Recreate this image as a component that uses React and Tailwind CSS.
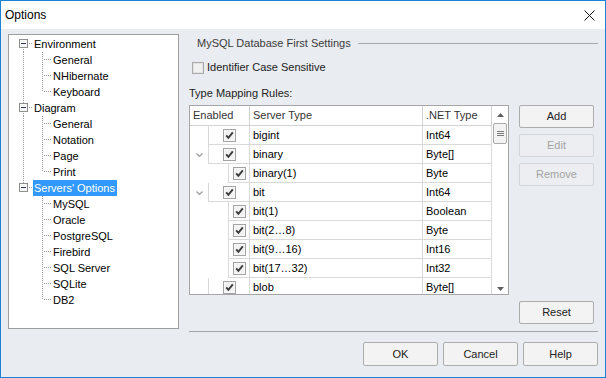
import React from "react";

const treeItems = [
  { t: "Environment", root: true, first: true },
  { t: "General", cont: true },
  { t: "NHibernate", cont: true },
  { t: "Keyboard", cont: true, last: true },
  { t: "Diagram", root: true },
  { t: "General", cont: true },
  { t: "Notation", cont: true },
  { t: "Page", cont: true },
  { t: "Print", cont: true, last: true },
  { t: "Servers' Options", root: true, lastRoot: true, sel: true },
  { t: "MySQL" },
  { t: "Oracle" },
  { t: "PostgreSQL" },
  { t: "Firebird" },
  { t: "SQL Server" },
  { t: "SQLite" },
  { t: "DB2", last: true },
];

const rows = [
  { n: "bigint", ty: "Int64", lv: 0 },
  { n: "binary", ty: "Byte[]", lv: 0, ex: true },
  { n: "binary(1)", ty: "Byte", lv: 1 },
  { n: "bit", ty: "Int64", lv: 0, ex: true },
  { n: "bit(1)", ty: "Boolean", lv: 1 },
  { n: "bit(2…8)", ty: "Byte", lv: 1 },
  { n: "bit(9…16)", ty: "Int16", lv: 1 },
  { n: "bit(17…32)", ty: "Int32", lv: 1 },
  { n: "blob", ty: "Byte[]", lv: 0 },
];

const DOT = "#9a9a9a";

function RootGlyph({ first, lastRoot }) {
  return (
    <svg width="24" height="16" className="shrink-0" shapeRendering="crispEdges">
      {!first && <line x1="14.5" y1="0" x2="14.5" y2="4" stroke={DOT} strokeDasharray="1 1" />}
      {!lastRoot && <line x1="14.5" y1="13" x2="14.5" y2="16" stroke={DOT} strokeDasharray="1 1" />}
      <rect x="10.5" y="3.5" width="8" height="8" fill="#fafafa" stroke="#8f8f8f" />
      <rect x="12" y="7" width="5" height="1" fill="#2a3550" />
      <line x1="20" y1="7.5" x2="24" y2="7.5" stroke={DOT} strokeDasharray="1 1" />
    </svg>
  );
}

function ChildGlyph({ cont, last }) {
  return (
    <svg width="43" height="16" className="shrink-0" shapeRendering="crispEdges">
      {cont && <line x1="14.5" y1="0" x2="14.5" y2="16" stroke={DOT} strokeDasharray="1 1" />}
      <line x1="33.5" y1="0" x2="33.5" y2={last ? 8 : 16} stroke={DOT} strokeDasharray="1 1" />
      <line x1="35" y1="7.5" x2="43" y2="7.5" stroke={DOT} strokeDasharray="1 1" />
    </svg>
  );
}

function Check() {
  return (
    <svg width="13" height="13" shapeRendering="crispEdges">
      <rect x="0.5" y="0.5" width="12" height="12" fill="#ececec" stroke="#a3a3a3" />
      <rect x="1.5" y="1.5" width="10" height="10" fill="#f2f2f2" stroke="#f8f8f8" />
      <path d="M3.2 6.4 L5.4 8.8 L9.8 3.4" fill="none" stroke="#3a3a3a" strokeWidth="1.9" shapeRendering="auto" />
    </svg>
  );
}

function Btn({ children, disabled, h = "h-[23px]" }) {
  return (
    <div
      className={
        disabled
          ? `${h} w-[75px] flex items-center justify-center rounded-[2px] border border-[#d2d5da] bg-[#eceef1] text-[#a3a3a3]`
          : `${h} w-[75px] flex items-center justify-center rounded-[2px] border border-[#acacac] bg-[#f3f3f3] text-[#222]`
      }
    >
      {children}
    </div>
  );
}

export default function App() {
  return (
    <div className="w-[606px] h-[378px] border border-[#1883d7] flex flex-col overflow-hidden font-['Liberation_Sans',Arial,sans-serif] text-[11px] text-black">
      {/* Title bar */}
      <div className="h-[28px] shrink-0 bg-white flex items-center justify-between pl-[4px] pr-[10px]">
        <span className="text-[12px] leading-none">Options</span>
        <svg width="11" height="11">
          <path d="M0.5 0.5 L10.5 10.5 M10.5 0.5 L0.5 10.5" stroke="#111" strokeWidth="1" />
        </svg>
      </div>

      {/* Body */}
      <div className="flex-1 bg-[#e9ecf0] flex">
        {/* Tree panel */}
        <div className="ml-[7px] mt-[5px] w-[171px] h-[295px] border border-[#9d9d9d] bg-white pt-[1px] shrink-0">
          {treeItems.map((it, i) => (
            <div key={i} className="h-[16px] flex items-center leading-[16px]">
              {it.root ? (
                <RootGlyph first={it.first} lastRoot={it.lastRoot} />
              ) : (
                <ChildGlyph cont={it.cont} last={it.last} />
              )}
              <span
                className={
                  it.sel
                    ? "pl-[1px] pr-[2px] bg-[#3399ff] text-white whitespace-nowrap"
                    : "pl-[1px] whitespace-nowrap"
                }
              >
                {it.t}
              </span>
            </div>
          ))}
        </div>

        {/* Right column */}
        <div className="ml-[10px] w-[409px] flex flex-col pt-[7px]">
          <div className="h-[14px] flex items-center">
            <span className="ml-[8px] text-[#3b3b3b] whitespace-nowrap">MySQL Database First Settings</span>
            <div className="flex-1 ml-[7px] h-px bg-[#a9a9a9]" />
          </div>

          <div className="mt-[11px] h-[13px] flex items-center">
            <svg width="12" height="12" className="ml-[3px]" shapeRendering="crispEdges">
              <rect x="0.5" y="0.5" width="11" height="11" fill="#f4f4f4" stroke="#a9a9a9" />
              <rect x="1.5" y="1.5" width="9" height="9" fill="#f1f1f1" stroke="#e3e3e3" />
            </svg>
            <span className="ml-[3px] text-[#222]">Identifier Case Sensitive</span>
          </div>

          <div className="mt-[12px] h-[14px] flex items-center text-[#222]">Type Mapping Rules:</div>

          <div className="mt-[5px] flex">
            {/* Grid */}
            <div className="w-[320px] h-[190px] border border-[#a5a5a5] bg-white flex overflow-hidden">
              <div className="w-[302px] flex flex-col">
                <div className="h-[20px] shrink-0 flex text-[#333]">
                  <div className="w-[60px] border-r border-b border-[#d3d3d3] pl-[3px] flex items-center">Enabled</div>
                  <div className="w-[173px] border-r border-b border-[#d3d3d3] pl-[3px] flex items-center">Server Type</div>
                  <div className="w-[69px] border-r border-b border-[#d3d3d3] pl-[3px] flex items-center">.NET Type</div>
                </div>
                {rows.map((r, i) => (
                  <div key={i} className="h-[19px] shrink-0 flex">
                    <div className={r.lv === 0 ? "w-[18px] flex items-center" : "w-[38px] flex items-center"}>
                      {r.ex && (
                        <svg width="7" height="5" className="ml-[6px] mt-[2px]">
                          <path d="M0.5 0.5 L3.5 3.5 L6.5 0.5" fill="none" stroke="#9b9b9b" strokeWidth="1.2" />
                        </svg>
                      )}
                    </div>
                    <div
                      className={
                        r.lv === 0
                          ? "w-[42px] border-l border-r border-b border-[#d9d9d9] flex items-center justify-center"
                          : "w-[22px] border-l border-r border-b border-[#d9d9d9] flex items-center justify-center"
                      }
                    >
                      <Check />
                    </div>
                    <div className="w-[173px] border-r border-b border-[#d9d9d9] pl-[3px] flex items-center whitespace-nowrap">{r.n}</div>
                    <div className="w-[69px] border-r border-b border-[#d9d9d9] pl-[3px] flex items-center whitespace-nowrap">{r.ty}</div>
                  </div>
                ))}
              </div>
              {/* Scrollbar */}
              <div className="w-[16px] flex flex-col items-center pt-[7px] pb-[3px]">
                <svg width="7" height="4">
                  <path d="M0 4 L3.5 0 L7 4 Z" fill="#5f5f5f" />
                </svg>
                <div className="mt-[6px] w-[14px] h-[21px] rounded-[2px] border border-[#ababab] bg-[#f3f3f3] flex flex-col items-center justify-center gap-[1px]">
                  <div className="w-[7px] h-px bg-[#7a7a7a]" />
                  <div className="w-[7px] h-px bg-[#7a7a7a]" />
                  <div className="w-[7px] h-px bg-[#7a7a7a]" />
                </div>
                <div className="flex-1" />
                <svg width="7" height="4">
                  <path d="M0 0 L3.5 4 L7 0 Z" fill="#5f5f5f" />
                </svg>
              </div>
            </div>

            {/* Side buttons */}
            <div className="ml-[10px] flex flex-col gap-[6px]">
              <Btn>Add</Btn>
              <Btn disabled>Edit</Btn>
              <Btn disabled>Remove</Btn>
            </div>
          </div>

          <div className="mt-[6px] flex justify-end pr-[4px]">
            <Btn>Reset</Btn>
          </div>

          <div className="mt-[7px] h-px bg-[#a5a5a5]" />

          <div className="mt-[10px] flex justify-end gap-[5px]">
            <Btn h="h-[24px]">OK</Btn>
            <Btn h="h-[24px]">Cancel</Btn>
            <Btn h="h-[24px]">Help</Btn>
          </div>
        </div>
      </div>
    </div>
  );
}
